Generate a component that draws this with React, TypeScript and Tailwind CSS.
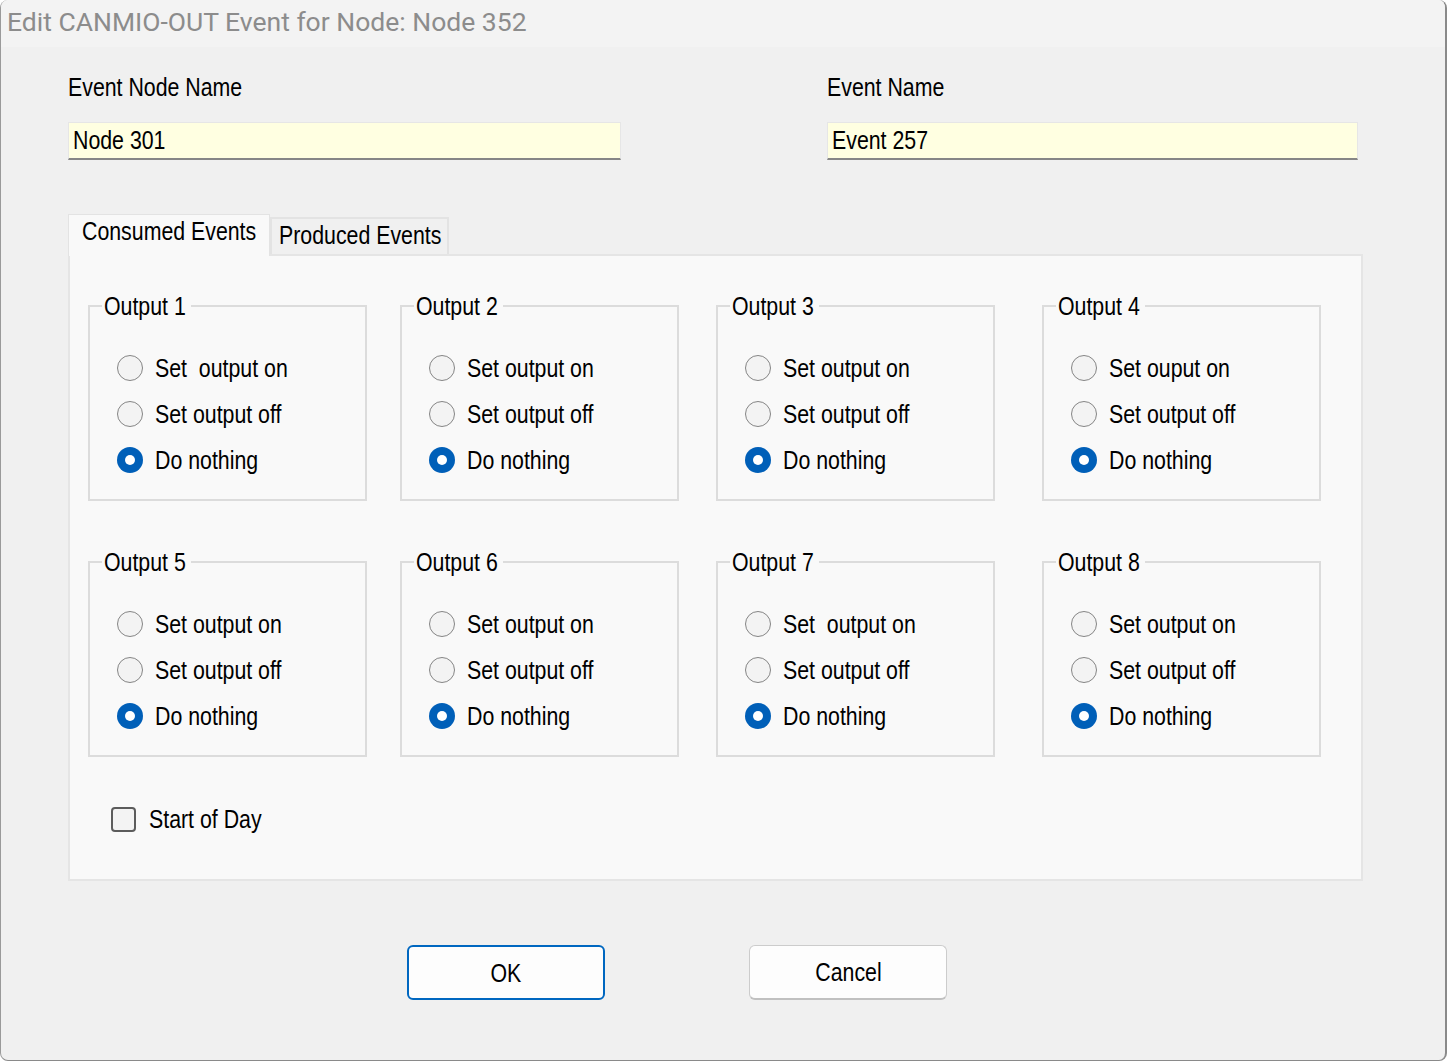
import React from "react";

const F = "font-['Liberation_Sans','Arial',sans-serif]";

type Group = { name: string; on: string; ml: string };

const row1: Group[] = [
  { name: "Output 1", on: "Set  output on", ml: "ml-0" },
  { name: "Output 2", on: "Set output on", ml: "ml-[33px]" },
  { name: "Output 3", on: "Set output on", ml: "ml-[37px]" },
  { name: "Output 4", on: "Set ouput on", ml: "ml-[47px]" },
];
const row2: Group[] = [
  { name: "Output 5", on: "Set output on", ml: "ml-0" },
  { name: "Output 6", on: "Set output on", ml: "ml-[33px]" },
  { name: "Output 7", on: "Set  output on", ml: "ml-[37px]" },
  { name: "Output 8", on: "Set output on", ml: "ml-[47px]" },
];

function T({ children, center }: { children: React.ReactNode; center?: boolean }) {
  return (
    <span
      className={`inline-block whitespace-pre leading-[30px] [transform:scaleX(0.82)] ${
        center ? "origin-center" : "origin-left"
      }`}
    >
      {children}
    </span>
  );
}

function Radio({ checked }: { checked?: boolean }) {
  if (checked) {
    return (
      <span className="w-[26px] h-[26px] rounded-full bg-[#005fb8] flex items-center justify-center shrink-0">
        <span className="w-[10px] h-[10px] rounded-full bg-white" />
      </span>
    );
  }
  return <span className="w-[26px] h-[26px] rounded-full border-[1.5px] border-[#858585] bg-[#f3f3f3] shrink-0" />;
}

function RadioRow({ label, checked }: { label: string; checked?: boolean }) {
  return (
    <div className="flex items-center h-[30px]">
      <Radio checked={checked} />
      <span className="ml-[12px] flex">
        <T>{label}</T>
      </span>
    </div>
  );
}

function OutputGroup({ g }: { g: Group }) {
  return (
    <fieldset className={`w-[279px] h-[210px] border-2 border-[#dcdcdc] ${g.ml}`}>
      <legend className="ml-[12px] pl-[2px] w-[89px] h-[30px] leading-[30px] whitespace-pre overflow-visible">
        <T>{g.name}</T>
      </legend>
      <div className="flex flex-col gap-[16px] pl-[27px] mt-[32px]">
        <RadioRow label={g.on} />
        <RadioRow label="Set output off" />
        <RadioRow label="Do nothing" checked />
      </div>
    </fieldset>
  );
}

export default function App() {
  return (
    <div className="w-[1448px] h-[1062px] bg-white">
      <div className="w-[1447px] h-[1061px] bg-[#f0f0f0] border-l border-l-[#9a9a9a] border-r-2 border-r-[#8a8a8a] border-b border-b-[#8a8a8a] rounded-t-[8px] rounded-b-[8px] overflow-hidden flex flex-col">
        <div className="h-[47px] bg-[#f3f3f3] pl-[6px] pt-[7px] shrink-0">
          <div className="font-['Roboto',sans-serif] text-[26.5px] leading-[30px] text-[#8c8c8c] whitespace-nowrap">
            Edit CANMIO-OUT Event for Node: Node 352
          </div>
        </div>

        <div className={`${F} text-[26px] text-black flex flex-col pl-[67px]`}>
          <div className="flex mt-[25px]">
            <div className="w-[553px] flex flex-col">
              <div className="h-[30px] flex">
                <T>Event Node Name</T>
              </div>
              <div className="mt-[20px] h-[38px] bg-[#ffffe1] border border-[#e6e6e6] border-b-2 border-b-[#868686] pl-[4px] pt-[2px] flex items-start">
                <T>Node 301</T>
              </div>
            </div>
            <div className="w-[531px] ml-[206px] flex flex-col">
              <div className="h-[30px] flex">
                <T>Event Name</T>
              </div>
              <div className="mt-[20px] h-[38px] bg-[#ffffe1] border border-[#e6e6e6] border-b-2 border-b-[#868686] pl-[4px] pt-[2px] flex items-start">
                <T>Event 257</T>
              </div>
            </div>
          </div>

          <div className="flex items-end mt-[54px] -mb-[2px] relative z-10">
            <div className="w-[202px] h-[42px] bg-[#f9f9f9] border border-b-0 border-[#e3e3e3] pl-[13px] pt-[1px] flex items-start">
              <T>Consumed Events</T>
            </div>
            <div className="w-[179px] h-[37px] mb-[2px] bg-[#f0f0f0] border-2 border-b-0 border-[#e3e3e3] pl-[7px] pt-[1px] flex items-start">
              <T>Produced Events</T>
            </div>
          </div>

          <div className="w-[1295px] h-[627px] bg-[#f9f9f9] border-2 border-[#e5e5e5] pl-[18px] pt-[35px] flex flex-col">
            <div className="flex">
              {row1.map((g) => (
                <OutputGroup key={g.name} g={g} />
              ))}
            </div>
            <div className="flex mt-[46px]">
              {row2.map((g) => (
                <OutputGroup key={g.name} g={g} />
              ))}
            </div>
            <div className="flex items-center mt-[47px] ml-[23px] h-[30px]">
              <span className="w-[25px] h-[25px] rounded-[4px] border-2 border-[#5c5c5c] bg-[#f3f3f3] shrink-0" />
              <span className="ml-[13px] flex">
                <T>Start of Day</T>
              </span>
            </div>
          </div>

          <div className="flex mt-[64px] ml-[339px]">
            <button className="w-[198px] h-[55px] rounded-[6px] border-2 border-[#0067c0] bg-[#fdfdfd] flex items-center justify-center">
              <T center>OK</T>
            </button>
            <button className="w-[198px] h-[55px] ml-[144px] rounded-[6px] border border-[#cccccc] border-b-2 border-b-[#c0c0c0] bg-[#fdfdfd] flex items-center justify-center">
              <T center>Cancel</T>
            </button>
          </div>
        </div>
      </div>
    </div>
  );
}
